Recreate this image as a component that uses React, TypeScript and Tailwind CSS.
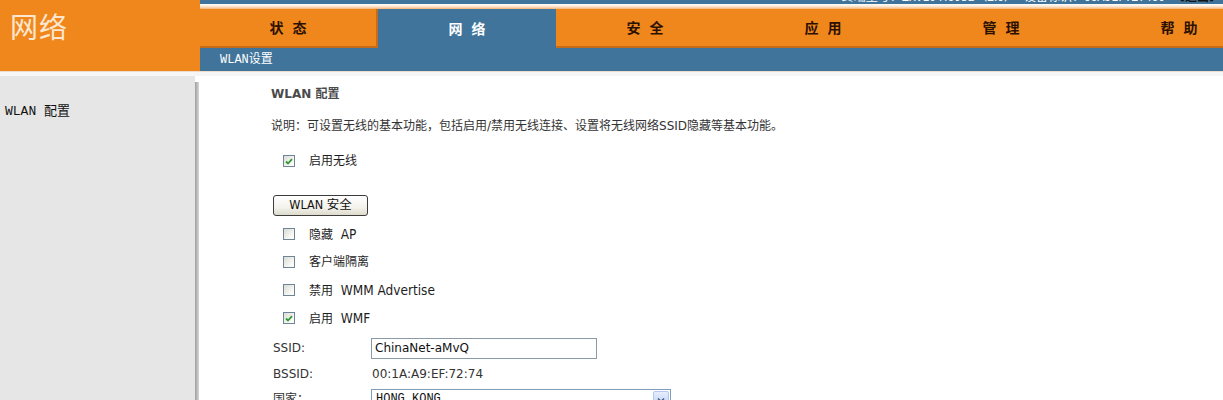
import React from "react";

const SANS = "font-['DejaVu_Sans','Noto_Sans_CJK_SC',sans-serif]";
const COND = "font-['DejaVu_Sans_Condensed','Noto_Sans_CJK_SC',sans-serif]";
const MONO = "font-['Liberation_Mono','Noto_Sans_CJK_SC',monospace]";

function Check({ checked }: { checked?: boolean }) {
  return (
    <div className="w-[12px] h-[12px] border border-[#6f8496] bg-[linear-gradient(135deg,#d9dcd4_0%,#f4f4f0_60%,#ffffff_100%)] flex items-center justify-center shrink-0">
      {checked && (
        <svg width="8" height="7" viewBox="0 0 8 7">
          <path d="M1 3.5 L3 5.5 L7 1.2" stroke="#2f9a2f" strokeWidth="1.8" fill="none" />
        </svg>
      )}
    </div>
  );
}

function CheckRow({ checked, cjk, latin }: { checked?: boolean; cjk: string; latin?: string }) {
  return (
    <div className={`h-[28px] shrink-0 flex items-center pl-[12px] gap-[14px] text-[12px] text-[#1e1e1e] ${COND}`}>
      <Check checked={checked} />
      <span className="whitespace-pre">
        {cjk}
        {latin && <span className="text-[13.5px]">{"  " + latin}</span>}
      </span>
    </div>
  );
}

const tabs = ["状 态", "网 络", "安 全", "应 用", "管 理", "帮 助"];

export default function App() {
  return (
    <div className="w-[1223px] h-[400px] overflow-hidden bg-white">
      {/* header */}
      <div className="flex h-[71px]">
        <div className="w-[200px] shrink-0 bg-[#f0871d] pl-[10px] pt-[12px]">
          <div className="text-[28px] leading-[28px] text-[#fbe6d0] font-['Noto_Sans_CJK_SC',sans-serif] tracking-[1px]">
            网络
          </div>
        </div>
        <div className="flex-1 flex flex-col min-w-0">
          <div className="h-[4px] bg-[#40749a] overflow-hidden flex justify-end pr-[2px]">
            <div className="mt-[-10px] text-[12px] leading-[12px] whitespace-nowrap text-white font-['Noto_Sans_CJK_SC',sans-serif]">
              终端型号：ZXV10 H608B（2.0）&nbsp;&nbsp;&nbsp;设备标识：00A9EF727460&nbsp;&nbsp;&nbsp;
              <span className="text-[#111] font-bold">【退出】</span>
            </div>
          </div>
          <div className="h-[5px] bg-[linear-gradient(to_bottom,#ffffff_0%,#fde6cf_50%,#f6b474_100%)]" />
          <div className="h-[39px] flex bg-[#f0871d]">
            {tabs.map((t, i) => (
              <div
                key={t}
                className={
                  i === 1
                    ? "w-[178px] shrink-0 bg-[#40749a] flex items-center justify-center text-white"
                    : i === 0
                    ? "w-[178px] shrink-0 border-b-[2px] border-r-[2px] border-[#c46c1a] flex items-center justify-center text-[#2b1000]"
                    : "w-[178px] shrink-0 border-b-[2px] border-[#c46c1a] flex items-center justify-center text-[#2b1000]"
                }
              >
                <span className="text-[14px] font-bold tracking-[3px] pl-[3px] whitespace-pre font-['Noto_Sans_CJK_SC',sans-serif]">
                  {t}
                </span>
              </div>
            ))}
          </div>
          <div className={`h-[23px] bg-[#40749a] flex items-center pl-[20px] text-[12px] text-white ${MONO}`}>
            WLAN设置
          </div>
        </div>
      </div>
      {/* separator */}
      <div className="h-[1px] bg-[#eddccb]" />
      <div className="h-[4px] bg-[#f6f6f6]" />
      {/* body */}
      <div className="flex min-h-[324px]">
        <div className="w-[195px] shrink-0 bg-[#e6e6e6] pl-[5px] pt-[28px]">
          <div className={`text-[13px] leading-[16px] text-[#111] ${MONO}`}>WLAN 配置</div>
        </div>
        <div className="w-[4px] shrink-0 mt-[6px] bg-[linear-gradient(to_right,#9e9e9e,#d8d8d8)]" />
        <div className={`flex-1 flex flex-col pl-[72px] ${SANS}`}>
          <div className="shrink-0 mt-[10px] h-[16px] leading-[16px] text-[12px] font-bold text-[#4a4a4a]">WLAN 配置</div>
          <div className="shrink-0 mt-[16px] h-[16px] leading-[16px] text-[12px] text-[#333]">
            说明：可设置无线的基本功能，包括启用/禁用无线连接、设置将无线网络SSID隐藏等基本功能。
          </div>
          <div className={`shrink-0 mt-[17px] h-[20px] flex items-center pl-[12px] gap-[14px] text-[12px] text-[#1e1e1e] ${COND}`}>
            <Check checked />
            <span>启用无线</span>
          </div>
          <div className="shrink-0 mt-[24px] ml-[2px]">
            <button
              className={`w-[95px] h-[21px] border border-[#3c3c3c] rounded-[3px] bg-[linear-gradient(to_bottom,#ffffff_0%,#f3f2ec_60%,#dedbcc_100%)] text-[12.5px] text-[#111] flex items-center justify-center ${COND}`}
            >
              WLAN 安全
            </button>
          </div>
          <div className="shrink-0 mt-[4px] flex flex-col">
            <CheckRow cjk="隐藏" latin="AP" />
            <CheckRow cjk="客户端隔离" />
            <CheckRow cjk="禁用" latin="WMM Advertise" />
            <CheckRow checked cjk="启用" latin="WMF" />
          </div>
          <div className="shrink-0 mt-[3px] h-[26px] flex items-center pl-[2px] text-[12px] text-[#333]">
            <div className="w-[98px] shrink-0">SSID:</div>
            <div className="w-[226px] h-[21px] border border-[#8c9aa8] flex items-center pl-[3px] text-[#111]">
              ChinaNet-aMvQ
            </div>
          </div>
          <div className="shrink-0 h-[26px] flex items-center pl-[2px] text-[12px] text-[#333]">
            <div className="w-[98px] shrink-0">BSSID:</div>
            <div className="pl-[1px]">00:1A:A9:EF:72:74</div>
          </div>
          <div className="shrink-0 h-[26px] flex items-start pt-[2px] pl-[2px] text-[12px] text-[#333]">
            <div className="w-[98px] shrink-0 pt-[1px]">国家：</div>
            <div className="w-[300px] h-[21px] border border-[#7f9db9] flex items-stretch">
              <div className={`flex-1 pl-[4px] text-[12px] leading-[18px] text-[#111] ${MONO}`}>HONG KONG</div>
              <div className="w-[16px] m-[1px] rounded-[2px] bg-[linear-gradient(to_bottom,#e6eefc,#b9cdf4)] border border-[#b3c5ec] flex items-center justify-center">
                <svg width="8" height="6" viewBox="0 0 8 6">
                  <path d="M1 1.5 L4 4.5 L7 1.5" stroke="#4d6185" strokeWidth="1.6" fill="none" />
                </svg>
              </div>
            </div>
          </div>
        </div>
      </div>
    </div>
  );
}
